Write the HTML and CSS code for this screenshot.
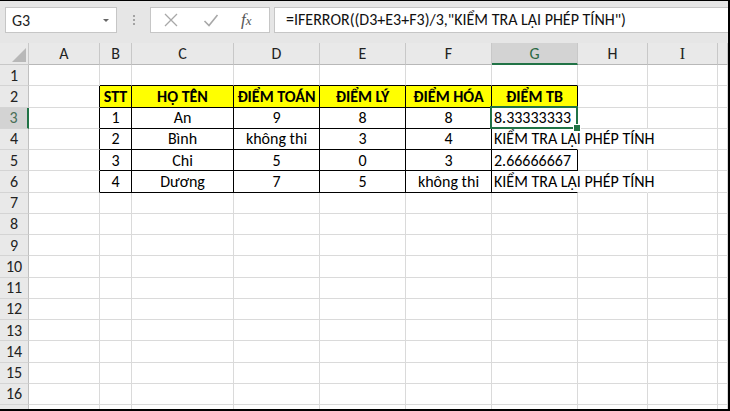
FILE: index.html
```html
<!DOCTYPE html>
<html lang="vi">

<head>
    <meta charset="UTF-8">
    <meta name="viewport" content="width=device-width, initial-scale=1.0">
    <title>Bảng điểm</title>
    <link rel="stylesheet" href="styles.css">
</head>

<body>
    <div class="window">
        <div class="toolbar">
            <div class="name-box">
                <span>G3</span>
                <span class="arrow"></span>
            </div>
            <div class="grip"><i></i><i></i><i></i></div>
            <div class="fx-buttons">
                <svg class="icon" width="16" height="16" viewBox="0 0 16 16">
                    <path d="M2 2 L14 14 M14 2 L2 14" stroke="#a8a8a8" stroke-width="1.3" fill="none" />
                </svg>
                <svg class="icon" width="16" height="16" viewBox="0 0 16 16">
                    <path d="M1.5 9 L6 13.5 L14.5 3" stroke="#a8a8a8" stroke-width="1.6" fill="none" />
                </svg>
                <span class="fx">f<span>x</span></span>
            </div>
            <div class="formula">=IFERROR((D3+E3+F3)/3,"KIỂM TRA LẠI PHÉP TÍNH")</div>
        </div>

        <div class="grid" id="grid"></div>
    </div>

    <script>
        const cols = ['A', 'B', 'C', 'D', 'E', 'F', 'G', 'H', 'I', ''];

        // rows 2-6 hold the score table in columns B..G
        const table = {
            2: ['STT', 'HỌ TÊN', 'ĐIỂM TOÁN', 'ĐIỂM LÝ', 'ĐIỂM HÓA', 'ĐIỂM TB'],
            3: ['1', 'An', '9', '8', '8', '8.33333333'],
            4: ['2', 'Bình', 'không thi', '3', '4', 'KIỂM TRA LẠI PHÉP TÍNH'],
            5: ['3', 'Chi', '5', '0', '3', '2.66666667'],
            6: ['4', 'Dương', '7', '5', 'không thi', 'KIỂM TRA LẠI PHÉP TÍNH']
        };

        const grid = document.getElementById('grid');

        function add(cls, text) {
            const el = document.createElement('div');
            el.className = cls;
            if (text) el.textContent = text;
            grid.appendChild(el);
            return el;
        }

        // column headers
        add('corner').appendChild(document.createElement('span'));
        cols.forEach(function (c) {
            add('ch' + (c === 'G' ? ' sel' : '') + (c === 'I' ? ' serif' : ''), c);
        });

        // row 17 only peeks out under the bottom edge, so its label is left off
        for (let r = 1; r <= 17; r++) {
            add('rh' + (r === 3 ? ' sel' : ''), r < 17 ? String(r) : '');
            const row = table[r];
            cols.forEach(function (c, i) {
                let cls = 'cell';
                let text = '';
                const inTable = row && i >= 1 && i <= 6;
                if (inTable) {
                    text = row[i - 1];
                    cls += ' t';
                    cls += (i === 6 && r > 2) ? ' left' : ' mid';
                    if (r === 2) cls += ' head';
                    // long text spills over into H, hiding the gridlines
                    if (i === 6 && text.length > 12) cls += ' spill';
                }
                if (table[r] && i === 0) cls += ' edge-r';
                if (r === 1 && i >= 1 && i <= 6) cls += ' edge-b';
                if ((r === 4 || r === 6) && c === 'H') cls += ' spill';
                if (r === 3 && c === 'G') cls += ' active';
                add(cls, text);
            });
        }
    </script>
</body>

</html>
```

FILE: styles.css
```css
* {
    margin: 0;
    padding: 0;
    box-sizing: border-box;
}

body {
    width: 730px;
    height: 411px;
    overflow: hidden;
    background: #fff;
    font-family: Calibri, Carlito, 'Lato', sans-serif;
    color: #000;
}

.window {
    width: 730px;
    height: 411px;
    border-top: 1px solid #000;
    border-right: 2px solid #000;
    border-bottom: 2px solid #000;
    overflow: hidden;
    background: #fff;
}

/* formula bar */

.toolbar {
    height: 42px;
    background: #e6e6e6;
    display: flex;
    align-items: flex-start;
    padding: 6px 0 0 5px;
}

.name-box {
    width: 112px;
    height: 26px;
    background: #fff;
    border: 1px solid #c6c6c6;
    display: flex;
    align-items: center;
    justify-content: space-between;
    padding: 0 7px 0 6px;
    font-size: 16px;
    color: #222;
}

.arrow {
    width: 0;
    height: 0;
    border-left: 3px solid transparent;
    border-right: 3px solid transparent;
    border-top: 3px solid #666;
}

.grip {
    width: 33px;
    height: 26px;
    display: flex;
    flex-direction: column;
    align-items: center;
    justify-content: center;
    gap: 2px;
}

.grip i {
    width: 2px;
    height: 2px;
    background: #a3a3a3;
}

.fx-buttons {
    width: 120px;
    height: 26px;
    background: #fff;
    border: 1px solid #c6c6c6;
    display: flex;
    align-items: center;
    padding-left: 12px;
    gap: 24px;
}

.icon {
    display: block;
}

.fx {
    font-family: 'Liberation Serif', serif;
    font-style: italic;
    font-size: 17px;
    color: #555;
    margin-left: -2px;
}

.fx span {
    font-size: 13px;
}

.formula {
    flex: 1;
    height: 26px;
    margin-left: 4px;
    margin-right: -4px;
    background: #fff;
    border: 1px solid #c6c6c6;
    padding-left: 11px;
    font-size: 16px;
    line-height: 24px;
    color: #111;
    white-space: nowrap;
}

/* sheet */

.grid {
    display: grid;
    grid-template-columns: 29px 71px 32px 102px 86px 86px 86px 86px 70px 70px 1fr;
    grid-template-rows: 22px;
    grid-auto-rows: 21.25px;
    font-size: 16px;
}

.corner {
    background: #e9e9e9;
    border-right: 1px solid #c8c8c8;
    border-bottom: 1px solid #c8c8c8;
    display: flex;
    justify-content: flex-end;
    align-items: flex-end;
    padding: 0 2px 2px 0;
}

.corner span {
    width: 14px;
    height: 14px;
    background: #b8b8b8;
    clip-path: polygon(100% 0, 100% 100%, 0 100%);
}

.ch {
    background: #e9e9e9;
    border-right: 1px solid #c8c8c8;
    border-bottom: 1px solid #b8b8b8;
    display: flex;
    align-items: center;
    justify-content: center;
    color: #222;
}

.ch.serif {
    font-family: 'Liberation Serif', serif;
}

.ch.sel {
    background: #d3d3d3;
    border-bottom: 2px solid #217346;
    color: #2c6a44;
}

.rh {
    background: #e9e9e9;
    border-right: 1px solid #c0c0c0;
    border-bottom: 1px solid #d4d4d4;
    display: flex;
    align-items: center;
    justify-content: center;
    color: #222;
}

.rh.sel {
    background: #d3d3d3;
    border-right: 2px solid #217346;
    color: #4a6f57;
}

.cell {
    border-right: 1px solid #dadada;
    border-bottom: 1px solid #dadada;
    display: flex;
    align-items: center;
    white-space: nowrap;
    overflow: visible;
    padding: 0 2px;
}

.cell.t {
    border-right-color: #000;
    border-bottom-color: #000;
}

.cell.mid {
    justify-content: center;
}

.cell.head {
    background: #ffff00;
    font-weight: bold;
}

.cell.edge-r {
    border-right-color: #000;
}

.cell.edge-b {
    border-bottom-color: #000;
}

.cell.spill {
    border-right-color: transparent;
}

.cell.active {
    position: relative;
    z-index: 1;
}

.cell.active::after {
    content: '';
    position: absolute;
    left: -2px;
    top: -2px;
    right: -1px;
    bottom: -1px;
    border: 2px solid #217346;
}

.cell.active::before {
    content: '';
    position: absolute;
    right: -4px;
    bottom: -4px;
    width: 6px;
    height: 6px;
    background: #217346;
    border: 1px solid #fff;
    z-index: 2;
}
```
